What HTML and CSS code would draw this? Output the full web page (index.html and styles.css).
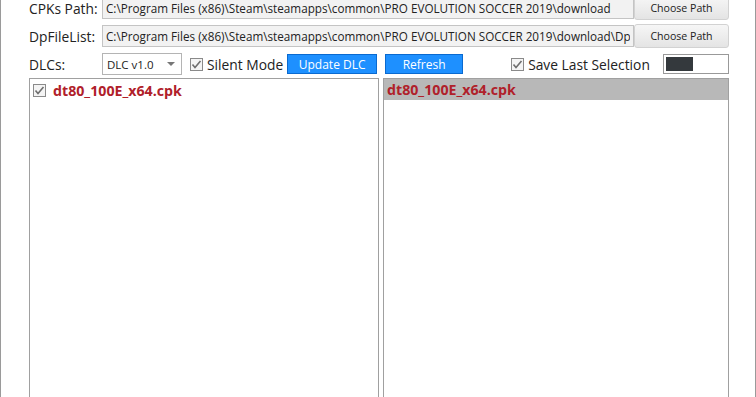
FILE: index.html
```html
<!DOCTYPE html>

<html>

<head>
    <title>DLC Manager</title>
    <meta charset="utf-8">

    <link rel="stylesheet" href="styles.css">
</head>

<body>
    <div class="window">
        <div class="form">
            <div class="row row-first">
                <label class="caption">CPKs Path:</label>
                <input class="path" type="text" readonly
                    value="C:\Program Files (x86)\Steam\steamapps\common\PRO EVOLUTION SOCCER 2019\download">
                <button class="choose">Choose Path</button>
            </div>

            <div class="row">
                <label class="caption">DpFileList:</label>
                <input class="path" type="text" readonly
                    value="C:\Program Files (x86)\Steam\steamapps\common\PRO EVOLUTION SOCCER 2019\download\DpFileList.bin">
                <button class="choose">Choose Path</button>
            </div>

            <div class="row">
                <label class="caption">DLCs:</label>
                <div class="combo">
                    <span>DLC v1.0</span>
                    <span class="arrow"></span>
                </div>

                <label class="check silent">
                    <svg class="box" width="13" height="13" viewBox="0 0 13 13">
                        <rect x="0.5" y="0.5" width="12" height="12" fill="#f4f4f4" stroke="#8a8a8a" />
                        <polyline points="2.5,6.5 5,9.5 10.5,3" fill="none" stroke="#6e6e6e" stroke-width="1.6" />
                    </svg>
                    Silent Mode
                </label>

                <button class="blue update">Update DLC</button>
                <button class="blue refresh">Refresh</button>

                <label class="check save">
                    <svg class="box" width="13" height="13" viewBox="0 0 13 13">
                        <rect x="0.5" y="0.5" width="12" height="12" fill="#f4f4f4" stroke="#8a8a8a" />
                        <polyline points="2.5,6.5 5,9.5 10.5,3" fill="none" stroke="#6e6e6e" stroke-width="1.6" />
                    </svg>
                    Save Last Selection
                </label>

                <div class="toggle"><span class="knob"></span></div>
            </div>
        </div>

        <div class="lists">
            <div class="list left">
                <div class="item">
                    <svg class="box" width="13" height="13" viewBox="0 0 13 13">
                        <rect x="0.5" y="0.5" width="12" height="12" fill="#f4f4f4" stroke="#8a8a8a" />
                        <polyline points="2.5,6.5 5,9.5 10.5,3" fill="none" stroke="#6e6e6e" stroke-width="1.6" />
                    </svg>
                    <span class="file">dt80_100E_x64.cpk</span>
                </div>
            </div>

            <div class="list right">
                <div class="item selected">
                    <span class="file">dt80_100E_x64.cpk</span>
                </div>
            </div>
        </div>
    </div>
</body>

</html>
```

FILE: styles.css
```css
body {
    font: 13px "Open Sans", "Noto Sans", sans-serif;
    color: #222;
    padding: 0;
    margin: 0;
    overflow: hidden;
}

.window {
    height: 397px;
    border-left: 1px solid #9a9a9a;
    border-right: 1px solid #9a9a9a;
    background: #fff;
    box-sizing: border-box;
    overflow: hidden;
}

.form {
    padding: 0 26px 0 28px;
    margin-top: -4px;
}

.row {
    display: flex;
    align-items: center;
    height: 24px;
    margin-bottom: 4px;
}

.caption {
    width: 73px;
    flex: none;
    font-size: 13.8px;
}

.path {
    /* read-only text box, windows style */
    -webkit-appearance: none;
    width: 532px;
    height: 22px;
    margin: 0;
    padding: 0 3px;
    border: 1px solid #c4c4c4;
    background: #f2f2f2;
    color: #222;
    font-family: inherit;
    font-size: 11.7px;
    box-sizing: border-box;
    outline: none;
}

.choose {
    width: 95px;
    height: 24px;
    margin: 0;
    border: 1px solid #d2d2d2;
    border-radius: 3px;
    background: linear-gradient(#f6f6f6, #e4e4e4);
    color: #222;
    font-family: inherit;
    font-size: 10.6px;
    box-sizing: border-box;
}

.combo {
    display: flex;
    align-items: center;
    justify-content: space-between;
    width: 80px;
    height: 22px;
    padding: 0 6px 0 4px;
    border: 1px solid #b4b4b4;
    font-size: 11.5px;
    box-sizing: border-box;
}

.arrow {
    width: 0;
    height: 0;
    border-left: 4px solid transparent;
    border-right: 4px solid transparent;
    border-top: 4px solid #777;
}

.check {
    display: flex;
    align-items: center;
    gap: 4px;
    font-size: 13.8px;
}

.silent {
    margin-left: 8px;
}

.blue {
    height: 20px;
    margin: 0;
    padding: 0;
    border: 1px solid #0a6ad0;
    background: #1e90ff;
    color: #fff;
    font-family: inherit;
    font-size: 12px;
    box-sizing: border-box;
}

.update {
    width: 90px;
    margin-left: 4px;
}

.refresh {
    width: 78px;
    margin-left: 8px;
}

.save {
    margin-left: 48px;
}

.toggle {
    width: 66px;
    height: 20px;
    margin-left: auto;
    padding: 2px;
    border: 1px solid #999;
    background: #fff;
    box-sizing: border-box;
}

.knob {
    display: block;
    width: 27px;
    height: 14px;
    background: #34393d;
}

.lists {
    display: flex;
    gap: 4px;
    padding: 0 26px 0 28px;
    margin-top: -2px;
}

.list {
    height: 330px;
    border: 1px solid #a0a0a0;
    background: #fff;
    box-sizing: border-box;
}

.left {
    width: 350px;
}

.right {
    width: 346px;
}

.item {
    display: flex;
    align-items: center;
    gap: 7px;
    height: 21px;
    padding: 0 3px;
}

.left .item {
    margin-top: 1px;
}

.selected {
    background: #b8b8b8;
}

.file {
    color: #b0202a;
    font-weight: bold;
    font-size: 14.2px;
}
```
